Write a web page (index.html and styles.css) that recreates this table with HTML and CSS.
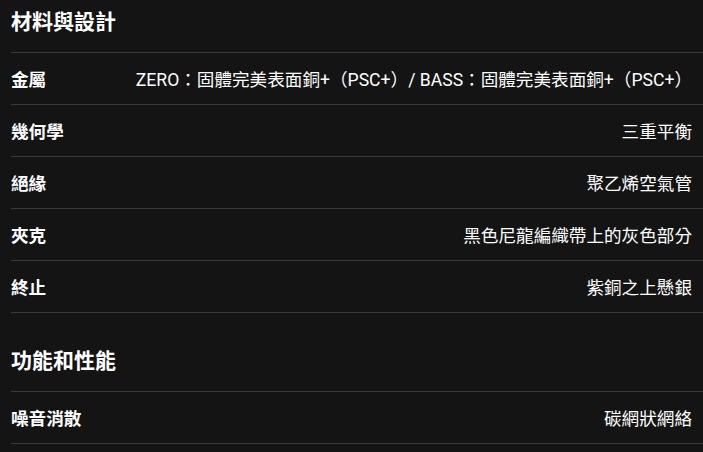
FILE: index.html
```html
<!DOCTYPE html>
<html lang="zh-Hant">
<head>
    <meta charset="UTF-8">
    <meta name="viewport" content="width=device-width, initial-scale=1.0">
    <title>規格</title>
    <link rel="stylesheet" href="styles.css">
</head>
<body>
    <div class="specs">
        <section class="spec-section">
            <h2 class="spec-title">材料與設計</h2>
            <div class="spec-row">
                <span class="spec-label">金屬</span>
                <span class="spec-value">ZERO：固體完美表面銅+（PSC+）/ BASS：固體完美表面銅+（PSC+）</span>
            </div>
            <div class="spec-row">
                <span class="spec-label">幾何學</span>
                <span class="spec-value">三重平衡</span>
            </div>
            <div class="spec-row">
                <span class="spec-label">絕緣</span>
                <span class="spec-value">聚乙烯空氣管</span>
            </div>
            <div class="spec-row">
                <span class="spec-label">夾克</span>
                <span class="spec-value">黑色尼龍編織帶上的灰色部分</span>
            </div>
            <div class="spec-row">
                <span class="spec-label">終止</span>
                <span class="spec-value">紫銅之上懸銀</span>
            </div>
        </section>

        <section class="spec-section">
            <h2 class="spec-title">功能和性能</h2>
            <div class="spec-row">
                <span class="spec-label">噪音消散</span>
                <span class="spec-value">碳網狀網絡</span>
            </div>
        </section>
    </div>
</body>
</html>
```

FILE: styles.css
```css
body {
    margin: 0;
    padding: 0;
    background-color: #141414;
    color: #ffffff;
    font-family: "Roboto", "Noto Sans CJK TC", sans-serif;
}

.specs {
    padding-left: 11px;
}

.spec-section + .spec-section {
    margin-top: 26px;
}

.spec-title {
    margin: 0;
    padding: 8px 0 16px;
    font-size: 21px;
    line-height: 28px;
    font-weight: bold;
    border-bottom: 1px solid #3a3a3a;
}

.spec-row {
    display: flex;
    justify-content: space-between;
    align-items: center;
    height: 51px;
    padding-right: 11px;
    border-bottom: 1px solid #3a3a3a;
    font-size: 17.6px;
}

.spec-label {
    font-weight: bold;
}

.spec-value {
    text-align: right;
}
```
